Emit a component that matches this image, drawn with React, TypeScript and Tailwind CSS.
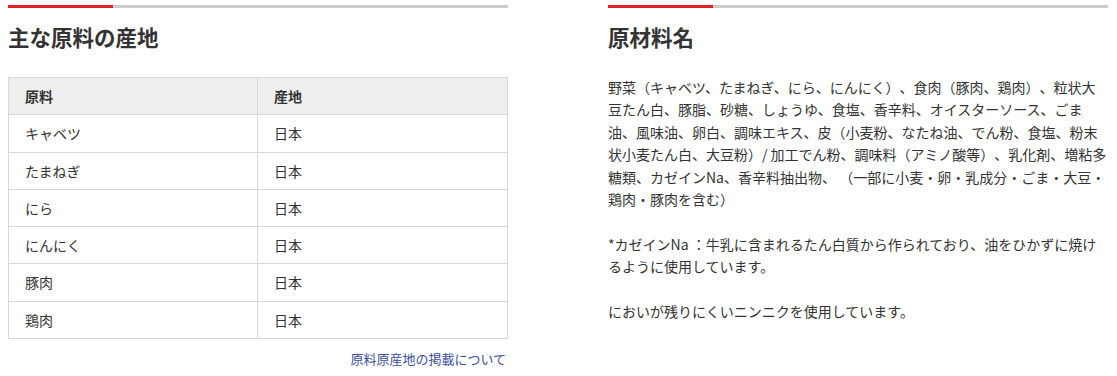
import React from "react";

const rows: [string, string][] = [
  ["キャベツ", "日本"],
  ["たまねぎ", "日本"],
  ["にら", "日本"],
  ["にんにく", "日本"],
  ["豚肉", "日本"],
  ["鶏肉", "日本"],
];

function Bar() {
  return (
    <div className="flex h-[3px] mt-[5px]">
      <div className="w-[105px] bg-[#e4212b]" />
      <div className="flex-1 bg-[#cccccc]" />
    </div>
  );
}

export default function App() {
  return (
    <div
      className="bg-white text-[#333333] px-[8px] flex gap-[100px] w-[1117px] h-[376px] [text-spacing-trim:space-all]"
      style={{ fontFamily: '"Noto Sans CJK JP", "Noto Sans", sans-serif' }}
    >
      <div className="w-[500px] shrink-0">
        <Bar />
        <h2 className="mt-[14px] text-[21.5px] leading-[30px] font-bold">主な原料の産地</h2>
        <table className="mt-[25px] w-full border-collapse text-[14px] leading-[20.3px]">
          <thead>
            <tr className="bg-[#eeeeee]">
              <th className="w-[249px] border border-[#d8d8d8] px-[16px] py-[8px] text-left font-bold">原料</th>
              <th className="border border-[#d8d8d8] px-[16px] py-[8px] text-left font-bold">産地</th>
            </tr>
          </thead>
          <tbody>
            {rows.map(([a, b]) => (
              <tr key={a}>
                <td className="border border-[#d8d8d8] px-[16px] py-[8px]">{a}</td>
                <td className="border border-[#d8d8d8] px-[16px] py-[8px]">{b}</td>
              </tr>
            ))}
          </tbody>
        </table>
        <div className="mt-[11px] text-right text-[13px] leading-[18px] pr-[2px]">
          <a className="text-[#3b4f9f]">原料原産地の掲載について</a>
        </div>
      </div>
      <div className="w-[500px] shrink-0">
        <Bar />
        <h2 className="mt-[14px] text-[21.5px] leading-[30px] font-bold">原材料名</h2>
        <p className="mt-[24px] text-[14px] leading-[22.4px]">
          野菜（キャベツ、たまねぎ、にら、にんにく）、食肉（豚肉、鶏肉）、粒状大<br />
          豆たん白、豚脂、砂糖、しょうゆ、食塩、香辛料、オイスターソース、ごま<br />
          油、風味油、卵白、調味エキス、皮（小麦粉、なたね油、でん粉、食塩、粉末<br />
          状小麦たん白、大豆粉）/ 加工でん粉、調味料（アミノ酸等）、乳化剤、増粘多<br />
          糖類、カゼインNa、香辛料抽出物、 （一部に小麦・卵・乳成分・ごま・大豆・<br />
          鶏肉・豚肉を含む）
          <br />
          <br />
          *カゼインNa ：牛乳に含まれるたん白質から作られており、油をひかずに焼け<br />
          るように使用しています。
          <br />
          <br />
          においが残りにくいニンニクを使用しています。
        </p>
      </div>
    </div>
  );
}
